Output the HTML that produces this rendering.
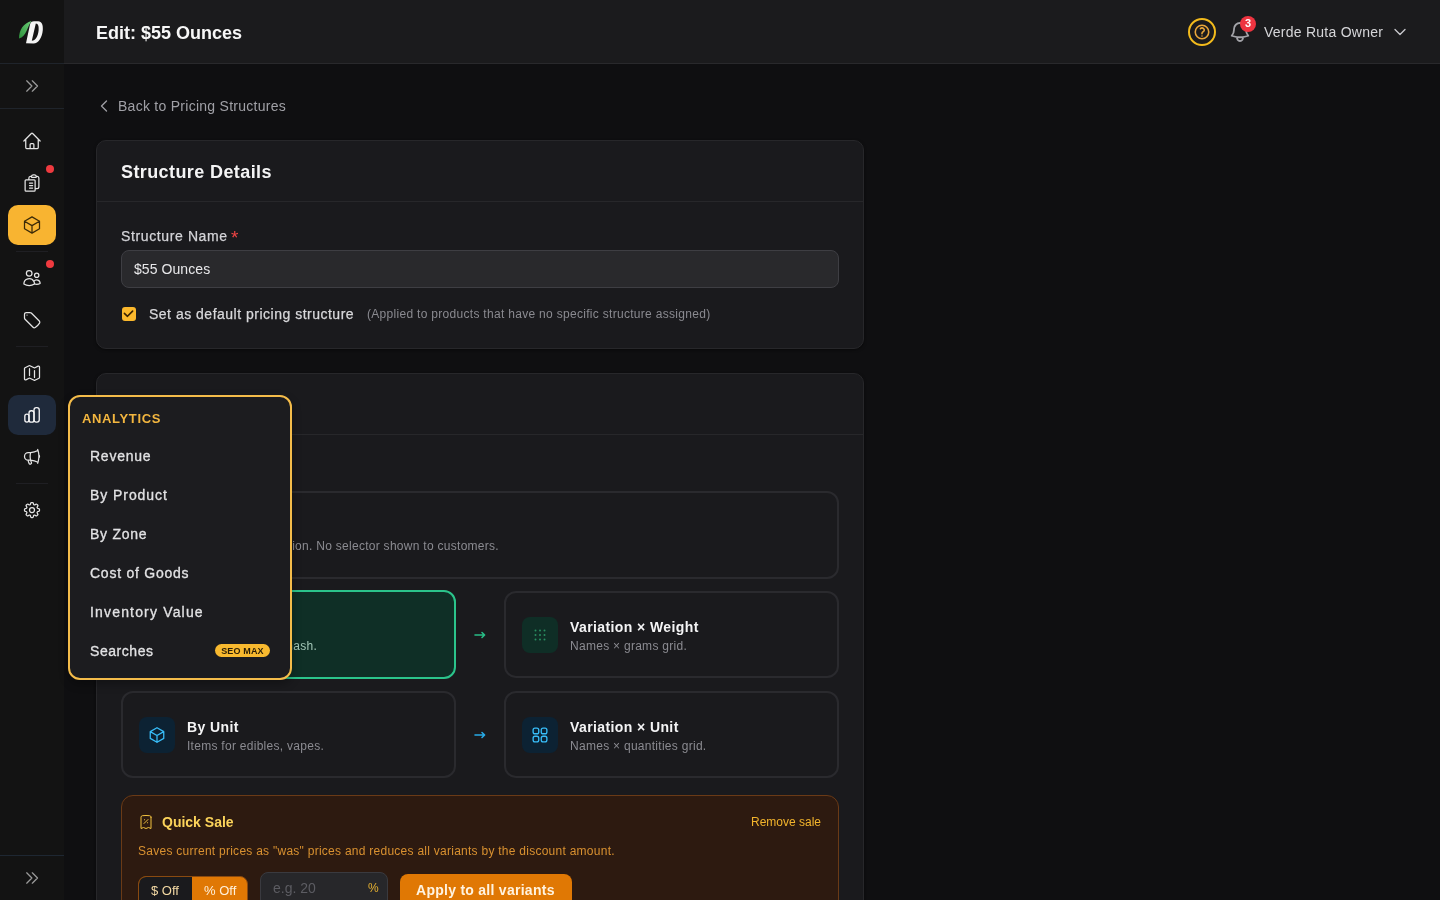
<!DOCTYPE html>
<html><head><meta charset="utf-8">
<style>
*{box-sizing:border-box;margin:0;padding:0}
html,body{width:1440px;height:900px;overflow:hidden;background:#0f0f11;font-family:"Liberation Sans",sans-serif;color:#e4e4e7}
.a{position:absolute}
.t{position:absolute;white-space:nowrap;line-height:1}
svg{display:block}
#side{left:0;top:0;width:64px;height:900px;background:#131313}
#hdr{left:64px;top:0;width:1376px;height:64px;background:#1b1b1d;border-bottom:1px solid #29292c}
.sline{position:absolute;left:0;width:64px;height:1px;background:#1f242b}
.sdiv{position:absolute;left:16px;width:32px;height:1px;background:#1f1f23}
.ico{position:absolute;left:22px;width:20px;height:20px}
.ico svg{width:20px;height:20px;fill:none;stroke:#e4e4e4;stroke-width:1.5;stroke-linecap:round;stroke-linejoin:round}
.dot{position:absolute;left:46px;width:8px;height:8px;border-radius:50%;background:#ef3a3f}
.card{position:absolute;left:96px;width:768px;background:#1a1a1d;border:1px solid #27272a;border-radius:10px;box-shadow:0 1px 3px rgba(0,0,0,.5)}
.opt{position:absolute;width:335px;height:87px;border:2px solid #2a2a2e;border-radius:12px;background:#1a1a1d}
.ibox{position:absolute;left:16px;top:24px;width:36px;height:36px;border-radius:8px}
.otitle{position:absolute;left:64px;top:27px;font-size:14px;font-weight:700;color:#f4f4f5;letter-spacing:.4px;line-height:1;white-space:nowrap}
.odesc{position:absolute;left:64px;top:47px;font-size:12px;color:#8b8b91;letter-spacing:.28px;line-height:1;white-space:nowrap}
.mi{position:absolute;left:90px;font-size:14px;color:#e2e2e4;letter-spacing:.75px;-webkit-text-stroke:.3px #e2e2e4;line-height:1;white-space:nowrap}
</style></head>
<body><div id="wrap" style="position:absolute;left:0;top:0;width:1440px;height:900px;will-change:transform">
<!-- SIDEBAR -->
<div id="side" class="a">
  <!-- logo -->
  <svg class="a" style="left:14px;top:14px" width="36" height="36" viewBox="0 0 36 36">
    <defs><linearGradient id="lg" x1="0" y1="1" x2="1" y2="0"><stop offset="0" stop-color="#2c8f3a"/><stop offset="1" stop-color="#6ccf78"/></linearGradient></defs>
    <path d="M5 24.5C5 16 9.5 9 17.5 7C15.5 10 14 13.5 12.5 17C11 20.5 8.5 23.5 5 24.5Z" fill="url(#lg)"/>
    <path fill-rule="evenodd" fill="#f4f4f4" d="M12 29.3L16 10.4C16.6 8.4 17.8 7.2 20 7.2L24.2 7.2C27.8 7.2 29.2 11 28.8 16C28.2 23.5 24.5 29.6 19.5 29.6ZM21.8 9.4L17.8 26.8C21.5 26.8 24 22 24.6 16.5C25 12.5 24.3 9.4 21.8 9.4Z"/>
  </svg>
  <div class="sline" style="top:63px"></div>
  <svg class="a" style="left:23px;top:77px" width="18" height="18" viewBox="0 0 18 18" fill="none" stroke="#9a9a9a" stroke-width="1.25" stroke-linecap="round" stroke-linejoin="round"><path d="M3.7 3.8 8.9 9 3.7 14.2M9.3 3.8 14.5 9 9.3 14.2"/></svg>
  <div class="sline" style="top:108px"></div>

  <div class="ico" style="top:131px"><svg viewBox="0 0 24 24"><path d="m2.25 12 8.954-8.955c.44-.439 1.152-.439 1.591 0L21.75 12M4.5 9.75v10.125c0 .621.504 1.125 1.125 1.125H9.75v-4.875c0-.621.504-1.125 1.125-1.125h2.25c.621 0 1.125.504 1.125 1.125V21h4.125c.621 0 1.125-.504 1.125-1.125V9.75M8.25 21h8.25"/></svg></div>
  <div class="dot" style="top:165px"></div>
  <div class="ico" style="top:173px"><svg viewBox="0 0 24 24"><path d="M9 12h3.75M9 15h3.75M9 18h3.75m3 .75H18a2.25 2.25 0 0 0 2.25-2.25V6.108c0-1.135-.845-2.098-1.976-2.192a48.424 48.424 0 0 0-1.123-.08m-5.801 0c-.065.21-.1.433-.1.664 0 .414.336.75.75.75h4.5a.75.75 0 0 0 .75-.75 2.25 2.25 0 0 0-.1-.664m-5.8 0A2.251 2.251 0 0 1 13.5 2.25H15c1.012 0 1.867.668 2.15 1.586m-5.8 0c-.376.023-.75.05-1.124.08C9.095 4.01 8.25 4.973 8.25 6.108V8.25m0 0H4.875c-.621 0-1.125.504-1.125 1.125v11.25c0 .621.504 1.125 1.125 1.125h9.75c.621 0 1.125-.504 1.125-1.125V9.375c0-.621-.504-1.125-1.125-1.125H8.25Z"/></svg></div>
  <div class="a" style="left:8px;top:205px;width:48px;height:40px;border-radius:10px;background:#f8b431"></div>
  <div class="ico" style="top:215px"><svg viewBox="0 0 24 24" style="stroke:#3b2a08"><path d="m21 7.5-9-5.25L3 7.5m18 0-9 5.25m9-5.25v9l-9 5.25M3 7.5l9 5.25M3 7.5v9l9 5.25m0-9v9"/></svg></div>
  <div class="sdiv" style="top:251px"></div>
  <div class="dot" style="top:260px"></div>
  <div class="ico" style="top:268px"><svg viewBox="0 0 24 24"><path d="M15 19.128a9.38 9.38 0 0 0 2.625.372 9.337 9.337 0 0 0 4.121-.952 4.125 4.125 0 0 0-7.533-2.493M15 19.128v-.003c0-1.113-.285-2.16-.786-3.07M15 19.128v.106A12.318 12.318 0 0 1 8.624 21c-2.331 0-4.512-.645-6.374-1.766l-.001-.109a6.375 6.375 0 0 1 11.964-3.07M12 6.375a3.375 3.375 0 1 1-6.75 0 3.375 3.375 0 0 1 6.75 0Zm8.25 2.25a2.625 2.625 0 1 1-5.25 0 2.625 2.625 0 0 1 5.25 0Z"/></svg></div>
  <div class="ico" style="top:310px"><svg viewBox="0 0 24 24"><path d="M9.568 3H5.25A2.25 2.25 0 0 0 3 5.25v4.318c0 .597.237 1.17.659 1.591l9.581 9.581c.699.699 1.78.872 2.607.33a18.095 18.095 0 0 0 5.223-5.223c.542-.827.369-1.908-.33-2.607L11.16 3.66A2.25 2.25 0 0 0 9.568 3Z"/><path d="M6 6h.008v.008H6V6Z"/></svg></div>
  <div class="sdiv" style="top:346px"></div>
  <div class="ico" style="top:363px"><svg viewBox="0 0 24 24"><path d="M9 6.75V15m6-6v8.25m.503 3.498 4.875-2.437c.381-.19.622-.58.622-1.006V4.82c0-.836-.88-1.38-1.628-1.006l-3.869 1.934c-.317.159-.69.159-1.006 0L9.503 3.252a1.125 1.125 0 0 0-1.006 0L3.622 5.689C3.24 5.88 3 6.27 3 6.695V19.18c0 .836.88 1.38 1.628 1.006l3.869-1.934c.317-.159.69-.159 1.006 0l4.994 2.497c.317.158.69.158 1.006 0Z"/></svg></div>
  <div class="a" style="left:8px;top:395px;width:48px;height:40px;border-radius:10px;background:#1f2a3b"></div>
  <div class="ico" style="top:405px"><svg viewBox="0 0 24 24" style="stroke:#f4f4f5;stroke-width:1.6"><rect x="3.4" y="10.9" width="5" height="9.7" rx="2.5"/><rect x="8.4" y="6.9" width="6" height="13.7" rx="2.7"/><rect x="14.4" y="3.1" width="6.3" height="17.5" rx="2.8"/></svg></div>
  <div class="ico" style="top:447px"><svg viewBox="0 0 24 24"><path d="M10.34 15.84c-.688-.06-1.386-.09-2.09-.09H7.5a4.5 4.5 0 1 1 0-9h.75c.704 0 1.402-.03 2.09-.09m0 9.18c.253.962.584 1.892.985 2.783.247.55.06 1.21-.463 1.511l-.657.38c-.551.318-1.26.117-1.527-.461a20.845 20.845 0 0 1-1.44-4.282m3.102.069a18.03 18.03 0 0 1-.59-4.59c0-1.586.205-3.124.59-4.59m0 9.18a23.848 23.848 0 0 1 8.835 2.535M10.34 6.66a23.847 23.847 0 0 0 8.835-2.535m0 0A23.74 23.74 0 0 0 18.795 3m.38 1.125a23.91 23.91 0 0 1 1.014 5.395m-1.014 8.855c-.118.38-.245.754-.38 1.125m.38-1.125a23.91 23.91 0 0 0 1.014-5.395m0-3.46c.495.413.811 1.035.811 1.73 0 .695-.316 1.317-.811 1.73m0-3.46a24.347 24.347 0 0 1 0 3.46"/></svg></div>
  <div class="sdiv" style="top:483px"></div>
  <div class="ico" style="top:500px"><svg viewBox="0 0 24 24"><path d="M10.343 3.94c.09-.542.56-.94 1.11-.94h1.093c.55 0 1.02.398 1.11.94l.149.894c.07.424.384.764.78.93.398.164.855.142 1.205-.108l.737-.527a1.125 1.125 0 0 1 1.45.12l.773.774c.39.389.44 1.002.12 1.45l-.527.737c-.25.35-.272.806-.107 1.204.165.397.505.71.93.78l.893.15c.543.09.94.559.94 1.109v1.094c0 .55-.397 1.02-.94 1.11l-.894.149c-.424.07-.764.383-.929.78-.165.398-.143.854.107 1.204l.527.738c.32.447.269 1.06-.12 1.45l-.774.773a1.125 1.125 0 0 1-1.449.12l-.738-.527c-.35-.25-.806-.272-1.203-.107-.398.165-.71.505-.781.929l-.149.894c-.09.542-.56.94-1.11.94h-1.094c-.55 0-1.019-.398-1.11-.94l-.148-.894c-.071-.424-.384-.764-.781-.93-.398-.164-.854-.142-1.204.108l-.738.527c-.447.32-1.06.269-1.45-.12l-.773-.774a1.125 1.125 0 0 1-.12-1.45l.527-.737c.25-.35.272-.806.108-1.204-.165-.397-.506-.71-.93-.78l-.894-.15c-.542-.09-.94-.56-.94-1.109v-1.094c0-.55.398-1.02.94-1.11l.894-.149c.424-.07.765-.383.93-.78.165-.398.143-.854-.108-1.204l-.526-.738a1.125 1.125 0 0 1 .12-1.45l.773-.773a1.125 1.125 0 0 1 1.45-.12l.737.527c.35.25.807.272 1.204.107.397-.165.71-.505.78-.929l.15-.894Z"/><path d="M15 12a3 3 0 1 1-6 0 3 3 0 0 1 6 0Z"/></svg></div>

  <div class="sline" style="top:855px;background:#1e2732"></div>
  <svg class="a" style="left:23px;top:869px" width="18" height="18" viewBox="0 0 18 18" fill="none" stroke="#9a9a9a" stroke-width="1.25" stroke-linecap="round" stroke-linejoin="round"><path d="M3.7 3.8 8.9 9 3.7 14.2M9.3 3.8 14.5 9 9.3 14.2"/></svg>
</div>

<!-- HEADER -->
<div id="hdr" class="a">
  <div class="t" style="left:32px;top:24px;font-size:18px;font-weight:700;color:#f7f7f7">Edit: $55 Ounces</div>
</div>
<!-- help -->
<div class="a" style="left:1188px;top:18px;width:28px;height:28px;border:2px solid #f3bb1c;border-radius:50%"></div>
<svg class="a" style="left:1193px;top:23px" width="18" height="18" viewBox="0 0 24 24" fill="none" stroke="#e9a63a" stroke-width="2.1" stroke-linecap="round" stroke-linejoin="round"><path d="M9.879 7.519c1.171-1.025 3.071-1.025 4.242 0 1.172 1.025 1.172 2.687 0 3.712-.203.179-.43.326-.67.442-.745.361-1.45.999-1.45 1.827v.75M21 12a9 9 0 1 1-18 0 9 9 0 0 1 18 0Zm-9 5.25h.008v.008H12v-.008Z"/></svg>
<!-- bell -->
<svg class="a" style="left:1228px;top:20px" width="24" height="24" viewBox="0 0 24 24" fill="none" stroke="#a3a3a8" stroke-width="1.8" stroke-linecap="round" stroke-linejoin="round"><path d="M14.857 17.082a23.848 23.848 0 0 0 5.454-1.31A8.967 8.967 0 0 1 18 9.75V9A6 6 0 0 0 6 9v.75a8.967 8.967 0 0 1-2.312 6.022c1.733.64 3.56 1.085 5.455 1.31m5.714 0a24.255 24.255 0 0 1-5.714 0m5.714 0a3 3 0 1 1-5.714 0"/></svg>
<div class="a" style="left:1240px;top:16px;width:16px;height:16px;border-radius:50%;background:#ee3440"></div>
<div class="t" style="left:1240px;top:18px;width:16px;text-align:center;font-size:11px;font-weight:700;color:#fff">3</div>
<div class="t" style="left:1264px;top:25px;font-size:14px;color:#d6d6d9;letter-spacing:.25px">Verde Ruta Owner</div>
<svg class="a" style="left:1392px;top:24px" width="16" height="16" viewBox="0 0 24 24" fill="none" stroke="#c8c8cc" stroke-width="2" stroke-linecap="round" stroke-linejoin="round"><path d="m19.5 8.25-7.5 7.5-7.5-7.5"/></svg>

<!-- BACK LINK -->
<svg class="a" style="left:96px;top:98px" width="16" height="16" viewBox="0 0 24 24" fill="none" stroke="#9d9da3" stroke-width="2" stroke-linecap="round" stroke-linejoin="round"><path d="M15.75 19.5 8.25 12l7.5-7.5"/></svg>
<div class="t" style="left:118px;top:99px;font-size:14px;color:#a0a0a6;letter-spacing:.27px">Back to Pricing Structures</div>

<!-- CARD 1 -->
<div class="card" style="top:140px;height:209px">
  <div class="a" style="left:0;top:60px;width:766px;height:1px;background:#27272a"></div>
</div>
<div class="t" style="left:121px;top:163px;font-size:18px;font-weight:700;color:#f4f4f5;letter-spacing:.4px">Structure Details</div>
<div class="t" style="left:121px;top:229px;font-size:14px;color:#d4d4d8;letter-spacing:.62px;-webkit-text-stroke:.25px #d4d4d8">Structure Name</div>
<div class="t" style="left:231px;top:228px;font-size:19px;color:#ef4444">*</div>
<div class="a" style="left:121px;top:250px;width:718px;height:38px;border-radius:8px;background:#29292c;border:1px solid #3e3e43"></div>
<div class="t" style="left:134px;top:262px;font-size:14px;color:#e8e8ea;letter-spacing:.07px">$55 Ounces</div>
<div class="a" style="left:122px;top:307px;width:14px;height:14px;border-radius:3px;background:#fbb82c"></div>
<svg class="a" style="left:122px;top:307px" width="14" height="14" viewBox="0 0 14 14" fill="none" stroke="#3a2200" stroke-width="1.6" stroke-linecap="round" stroke-linejoin="round"><path d="M2.4 6.4 5.5 9.3 10.6 4.1"/></svg>
<div class="t" style="left:149px;top:307px;font-size:14px;color:#d8d8db;letter-spacing:.5px;-webkit-text-stroke:.25px #d8d8db">Set as default pricing structure</div>
<div class="t" style="left:367px;top:308px;font-size:12px;color:#8a8a90;letter-spacing:.3px">(Applied to products that have no specific structure assigned)</div>

<!-- CARD 2 -->
<div class="card" style="top:373px;height:600px">
  <div class="a" style="left:0;top:60px;width:766px;height:1px;background:#27272a"></div>
</div>
<div class="a" style="left:121px;top:491px;width:718px;height:88px;border:2px solid #2a2a2e;border-radius:12px"></div>
<div class="t" style="right:941px;top:540px;font-size:12px;color:#8b8b91;letter-spacing:.28px;text-align:right">Single price per variation. No selector shown to customers.</div>

<!-- option cards -->
<div class="opt" style="left:121px;top:590px;height:89px;border-color:#2bc48b;background:#0f2f26">
  <div class="ibox" style="background:#12483a"></div>
  <div class="otitle">By Weight</div>
  <div class="odesc" style="color:#a2c6b6;left:auto;right:137px;top:48px;text-align:right">Grams for flower and hash.</div>
</div>
<svg class="a" style="left:472px;top:629px" width="16" height="12" viewBox="0 0 16 12" fill="none" stroke="#28bd86" stroke-width="1.6" stroke-linecap="round" stroke-linejoin="round"><path d="M3 6h9.4M10 3.5 12.6 6 10 8.5"/></svg>
<div class="opt" style="left:504px;top:591px">
  <div class="ibox" style="background:#0f2e26"></div>
  <svg class="a" style="left:28px;top:36px" width="12" height="12" viewBox="0 0 12 12" fill="#2a8c60"><circle cx="1.5" cy="1.5" r="1"/><circle cx="6" cy="1.5" r="1"/><circle cx="10.5" cy="1.5" r="1"/><circle cx="1.5" cy="6" r="1"/><circle cx="6" cy="6" r="1"/><circle cx="10.5" cy="6" r="1"/><circle cx="1.5" cy="10.5" r="1"/><circle cx="6" cy="10.5" r="1"/><circle cx="10.5" cy="10.5" r="1"/></svg>
  <div class="otitle">Variation × Weight</div>
  <div class="odesc">Names × grams grid.</div>
</div>
<div class="opt" style="left:121px;top:691px">
  <div class="ibox" style="background:#0c2233"></div>
  <svg class="a" style="left:25px;top:33px" width="18" height="18" viewBox="0 0 24 24" fill="none" stroke="#38bdf8" stroke-width="1.7" stroke-linecap="round" stroke-linejoin="round"><path d="m21 7.5-9-5.25L3 7.5m18 0-9 5.25m9-5.25v9l-9 5.25M3 7.5l9 5.25M3 7.5v9l9 5.25m0-9v9"/></svg>
  <div class="otitle">By Unit</div>
  <div class="odesc">Items for edibles, vapes.</div>
</div>
<svg class="a" style="left:472px;top:729px" width="16" height="12" viewBox="0 0 16 12" fill="none" stroke="#27aae6" stroke-width="1.6" stroke-linecap="round" stroke-linejoin="round"><path d="M3 6h9.4M10 3.5 12.6 6 10 8.5"/></svg>
<div class="opt" style="left:504px;top:691px">
  <div class="ibox" style="background:#0c2233"></div>
  <svg class="a" style="left:24px;top:32px" width="20" height="20" viewBox="0 0 24 24" fill="none" stroke="#38bdf8" stroke-width="1.6" stroke-linecap="round" stroke-linejoin="round"><path d="M3.75 6A2.25 2.25 0 0 1 6 3.75h2.25A2.25 2.25 0 0 1 10.5 6v2.25a2.25 2.25 0 0 1-2.25 2.25H6a2.25 2.25 0 0 1-2.25-2.25V6ZM3.75 15.75A2.25 2.25 0 0 1 6 13.5h2.25a2.25 2.25 0 0 1 2.25 2.25V18a2.25 2.25 0 0 1-2.25 2.25H6A2.25 2.25 0 0 1 3.75 18v-2.25ZM13.5 6a2.25 2.25 0 0 1 2.25-2.25H18A2.25 2.25 0 0 1 20.25 6v2.25A2.25 2.25 0 0 1 18 10.5h-2.25a2.25 2.25 0 0 1-2.25-2.25V6ZM13.5 15.75a2.25 2.25 0 0 1 2.25-2.25H18a2.25 2.25 0 0 1 2.25 2.25V18A2.25 2.25 0 0 1 18 20.25h-2.25A2.25 2.25 0 0 1 13.5 18v-2.25Z"/></svg>
  <div class="otitle">Variation × Unit</div>
  <div class="odesc">Names × quantities grid.</div>
</div>

<!-- QUICK SALE -->
<div class="a" style="left:121px;top:795px;width:718px;height:200px;border:1px solid #6a3a16;border-radius:12px;background:#2d1a10"></div>
<svg class="a" style="left:138px;top:814px" width="16" height="16" viewBox="0 0 24 24" fill="none" stroke="#f3c23f" stroke-width="1.5" stroke-linecap="round" stroke-linejoin="round"><path d="m9 14.25 6-6m4.5-3.493V21.75l-3.75-1.5-3.75 1.5-3.75-1.5-3.75 1.5V4.757c0-1.108.806-2.057 1.907-2.185a48.507 48.507 0 0 1 11.186 0c1.1.128 1.907 1.077 1.907 2.185ZM9.750 9h.008v.008H9.75V9Zm4.5 4.5h.008v.008h-.008V13.5Z"/></svg>
<div class="t" style="left:162px;top:815px;font-size:14px;font-weight:700;color:#fbd35a">Quick Sale</div>
<div class="t" style="left:751px;top:816px;font-size:12px;color:#f2b42c">Remove sale</div>
<div class="t" style="left:138px;top:845px;font-size:12px;color:#d99130;letter-spacing:.26px">Saves current prices as "was" prices and reduces all variants by the discount amount.</div>
<div class="a" style="left:138px;top:876px;width:110px;height:40px;border:1px solid #8a4a10;border-radius:8px;overflow:hidden;background:#e07804">
  <div class="a" style="left:0;top:0;width:53px;height:40px;background:#1a1a1d"></div>
</div>
<div class="t" style="left:151px;top:884px;font-size:13px;color:#f3d9a4">$ Off</div>
<div class="t" style="left:204px;top:884px;font-size:13px;color:#fff1dc">% Off</div>
<div class="a" style="left:260px;top:872px;width:128px;height:40px;border:1px solid #3a3a3f;border-radius:8px;background:#27272a"></div>
<div class="t" style="left:273px;top:881px;font-size:14px;color:#5c5c62">e.g. 20</div>
<div class="t" style="left:368px;top:882px;font-size:12px;color:#e5b030">%</div>
<div class="a" style="left:400px;top:874px;width:172px;height:40px;border-radius:8px;background:#e07804"></div>
<div class="t" style="left:416px;top:883px;font-size:14px;font-weight:700;color:#fff3e0;letter-spacing:.27px">Apply to all variants</div>

<!-- POPOVER -->
<div class="a" style="left:68px;top:395px;width:224px;height:285px;border:2px solid #f4bc4a;border-radius:12px;background:#1c1c1f;box-shadow:0 4px 10px rgba(0,0,0,.3)"></div>
<div class="t" style="left:82px;top:412px;font-size:13px;font-weight:700;color:#f3b63f;letter-spacing:.65px">ANALYTICS</div>
<div class="mi" style="top:449px">Revenue</div>
<div class="mi" style="top:488px;letter-spacing:.93px">By Product</div>
<div class="mi" style="top:527px">By Zone</div>
<div class="mi" style="top:566px">Cost of Goods</div>
<div class="mi" style="top:605px;letter-spacing:1.17px">Inventory Value</div>
<div class="mi" style="top:644px;letter-spacing:.55px">Searches</div>
<div class="a" style="left:215px;top:644px;width:55px;height:13px;border-radius:7px;background:#f8b92f"></div>
<div class="t" style="left:215px;top:647px;width:55px;text-align:center;font-size:9px;font-weight:700;color:#2a1d05;letter-spacing:.15px">SEO MAX</div>
</div></body></html>
